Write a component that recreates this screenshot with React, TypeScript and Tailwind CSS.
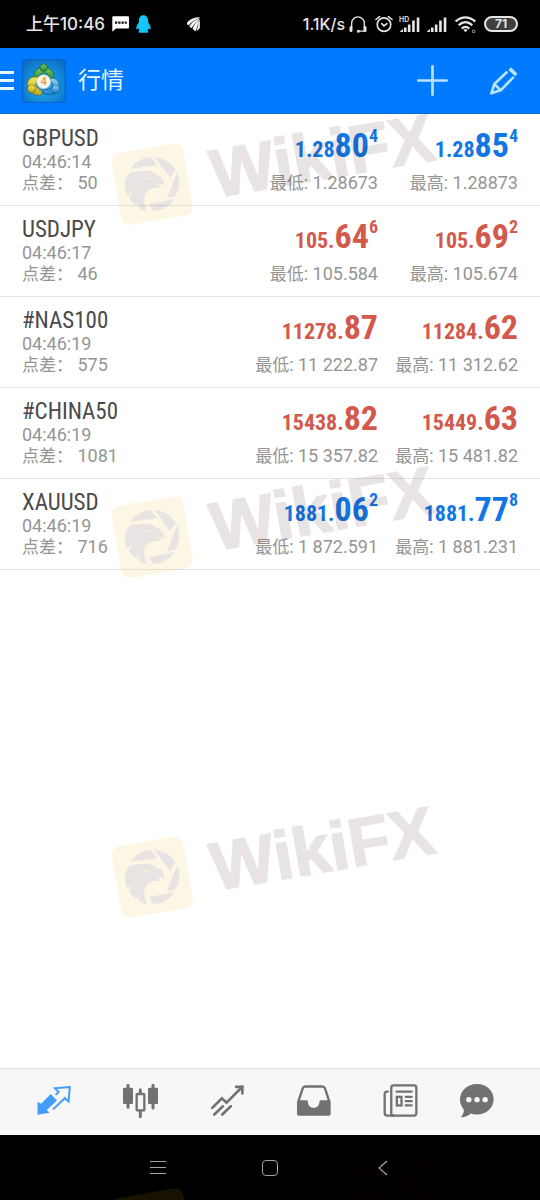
import type { ReactNode } from "react";

type Price = { small: string; big: string; sup?: string };

type Quote = {
  symbol: string;
  time: string;
  spread: string;
  up: boolean;
  bid: Price;
  ask: Price;
  low: string;
  high: string;
};

const quotes: Quote[] = [
  { symbol: "GBPUSD", time: "04:46:14", spread: "50", up: true, bid: { small: "1.28", big: "80", sup: "4" }, ask: { small: "1.28", big: "85", sup: "4" }, low: "1.28673", high: "1.28873" },
  { symbol: "USDJPY", time: "04:46:17", spread: "46", up: false, bid: { small: "105.", big: "64", sup: "6" }, ask: { small: "105.", big: "69", sup: "2" }, low: "105.584", high: "105.674" },
  { symbol: "#NAS100", time: "04:46:19", spread: "575", up: false, bid: { small: "11278.", big: "87" }, ask: { small: "11284.", big: "62" }, low: "11 222.87", high: "11 312.62" },
  { symbol: "#CHINA50", time: "04:46:19", spread: "1081", up: false, bid: { small: "15438.", big: "82" }, ask: { small: "15449.", big: "63" }, low: "15 357.82", high: "15 481.82" },
  { symbol: "XAUUSD", time: "04:46:19", spread: "716", up: true, bid: { small: "1881.", big: "06", sup: "2" }, ask: { small: "1881.", big: "77", sup: "8" }, low: "1 872.591", high: "1 881.231" },
];

function StatusBar() {
  return (
    <div className="flex h-12 items-center bg-black pl-[26px] pr-[22px] font-['Inter','Noto_Sans_CJK_SC',sans-serif] text-base font-medium leading-none text-[#e6e6e6]">
      <span className="text-[17px]">上午10:46</span>
      <svg viewBox="0 0 52 48" className="ml-[7px] h-4 w-[17px]" aria-hidden="true">
        <path d="M3 0H49Q52 0 52 3V35Q52 38 49 38H12L1 48V3Q1 0 3 0Z" fill="#fff" />
        <path d="M9 16h7v7H9zM19 16h7v7h-7zM29 16h7v7h-7zM39 16h6v7h-6z" fill="#111" />
      </svg>
      <svg viewBox="0 0 46 54" className="ml-[7px] h-[18px] w-[15px]" aria-hidden="true">
        <path d="M23 0C33 0 37 8 37 17V22C42 29 46 36 45 42C44 45 41 42 39 40C38 43 37 45 35 47C39 49 40 54 33 54H13C6 54 7 49 11 47C9 45 8 43 7 40C5 42 2 45 1 42C0 36 4 29 9 22V17C9 8 13 0 23 0Z" fill="#12c8f8" />
      </svg>
      <svg viewBox="0 0 40 44" className="ml-9 h-[15px] w-[13px]" aria-hidden="true">
        <path d="M0 18C8 7 22 0 38 1C25 6 13 13 4 24ZM8 28C14 17 24 8 38 5C29 13 20 22 14 32ZM18 35C23 24 30 13 39 9C34 20 29 30 26 42ZM31 40C34 30 36 20 39 14V30Q37 38 31 40Z" fill="#fff" stroke="#fff" strokeWidth="2" />
      </svg>
      <span className="ml-auto">1.1K/s</span>
      <svg viewBox="0 0 54 50" className="ml-1 h-[17px] w-[18px]" fill="none" stroke="currentColor" aria-hidden="true">
        <path d="M8 34V21a19 19 0 0 1 38 0v13M50 45H30" strokeWidth="4" />
        <path d="M6 34v9M48 34v9" strokeWidth="9" strokeLinecap="round" />
        <circle cx="28" cy="45" r="2" strokeWidth="5" />
      </svg>
      <svg viewBox="0 0 56 54" className="ml-2 h-[18px] w-[18px]" fill="none" stroke="currentColor" strokeWidth="5" strokeLinecap="round" aria-hidden="true">
        <circle cx="28" cy="29" r="21" />
        <path d="M3 13 14 4M53 13 42 4M21 26l7 7 9-7" />
      </svg>
      <svg viewBox="0 0 64 50" className="ml-[6px] h-[17px] w-[21px]" fill="currentColor" aria-hidden="true">
        <text x="0" y="16" fontSize="21" fontWeight="600">HD</text>
        <path d="M2 48 12 38V48ZM15 34h8v14h-8zM27 25h8v23h-8zM40 13h8v35h-8zM54 4h8v44h-8z" />
      </svg>
      <svg viewBox="0 0 64 50" className="ml-[6px] h-[17px] w-[21px]" fill="currentColor" aria-hidden="true">
        <path d="M2 48 12 38V48ZM15 34h8v14h-8zM27 25h8v23h-8zM40 13h8v35h-8zM54 4h8v44h-8z" />
      </svg>
      <svg viewBox="0 0 62 50" className="ml-2 h-[17px] w-[21px]" fill="none" stroke="currentColor" strokeWidth="7" aria-hidden="true">
        <path d="M2 16Q30-8 60 16M11 27Q31 9 51 27M20 37Q31 27 42 37" />
        <path d="m31 48-6-7q6-5 12 0Z" fill="currentColor" stroke="none" />
        <circle cx="55" cy="45" r="4" strokeWidth="3" opacity=".6" />
      </svg>
      <span className="ml-2 flex h-4 w-[34px] items-center justify-center rounded-full border-2 border-[#e6e6e6] bg-[#3f3f3f] text-[12px] font-bold leading-none">71</span>
    </div>
  );
}

function AppLogo() {
  return (
    <svg viewBox="0 0 132 132" className="size-11" role="img" aria-label="MetaTrader 4">
      <defs>
        <radialGradient id="tile" cx=".5" cy=".6" r=".7">
          <stop offset="0" stopColor="#21b4ee" />
          <stop offset="1" stopColor="#0a6cc6" />
        </radialGradient>
        <linearGradient id="green" x1="0" y1="0" x2="0" y2="1"><stop stopColor="#7cc95c" /><stop offset="1" stopColor="#1e8a3c" /></linearGradient>
        <linearGradient id="yellow" x1="0" y1="0" x2="0" y2="1"><stop stopColor="#f5e65c" /><stop offset="1" stopColor="#bfa81c" /></linearGradient>
        <linearGradient id="blue" x1="0" y1="0" x2="0" y2="1"><stop stopColor="#8fd6fa" /><stop offset="1" stopColor="#1b80d0" /></linearGradient>
      </defs>
      <rect x="2" y="2" width="128" height="128" rx="8" fill="url(#tile)" stroke="#0a5ec4" strokeWidth="3" />
      <path d="M36 64C33 36 45 26 65 26S98 36 95 62L82 58C80 45 74 42 65 42S52 48 50 60Z" fill="url(#green)" stroke="#135a2a" strokeWidth="2" />
      <circle cx="65" cy="26" r="11" fill="url(#green)" stroke="#135a2a" strokeWidth="2" />
      <path d="M16 76C18 57 32 50 50 56V68C42 68 38 74 44 82C48 90 54 94 62 96L58 108C42 110 30 104 24 96Z" fill="url(#yellow)" stroke="#6b6614" strokeWidth="2" />
      <circle cx="29" cy="89" r="12" fill="url(#yellow)" stroke="#6b6614" strokeWidth="2" />
      <path d="M88 56C108 58 117 76 110 92C101 109 78 111 60 101L66 90C78 94 88 90 91 82C93 74 90 68 84 66Z" fill="url(#blue)" stroke="#0d5090" strokeWidth="2" />
      <circle cx="101" cy="90" r="12" fill="url(#blue)" stroke="#0d5090" strokeWidth="2" />
      <circle cx="65" cy="68" r="21" fill="#f7f5f0" stroke="#c9c9bd" strokeWidth="2" />
      <text x="65" y="79" textAnchor="middle" fontSize="32" fontWeight="700" fill="#f19a52" fontFamily="Liberation Sans, sans-serif">4</text>
    </svg>
  );
}

function Header() {
  return (
    <header className="flex h-[66px] items-center border-b border-[#0a6bd6] bg-[#007aff] pr-[22px]">
      <button type="button" aria-label="菜单" className="flex w-[14px] flex-col gap-[5px]">
        <span className="h-[3px] bg-[#e8f8ff]" />
        <span className="h-[3px] bg-[#e8f8ff]" />
        <span className="h-[3px] bg-[#e8f8ff]" />
      </button>
      <span className="ml-2"><AppLogo /></span>
      <h1 className="ml-3 text-[23px] leading-8 text-[#e4f4ff]">行情</h1>
      <button type="button" aria-label="添加" className="ml-auto">
        <svg viewBox="0 0 92 92" className="size-[31px]" stroke="#b8e3ff" strokeWidth="8" strokeLinecap="round"><path d="M46 4V88M4 46H88" /></svg>
      </button>
      <button type="button" aria-label="编辑" className="ml-[42px]">
        <svg viewBox="0 0 84 84" className="size-7" fill="none" stroke="#b8e3ff" strokeWidth="8" strokeLinejoin="round" strokeLinecap="round">
          <path d="M50 16 13 51 4 79 32 70 69 32M14 52 31 69" />
          <path d="M59 5 79 24" strokeWidth="11" strokeLinecap="butt" />
        </svg>
      </button>
    </header>
  );
}

function PriceColumn({ price, up, label, range }: { price: Price; up: boolean; label: string; range: string }) {
  return (
    <div className="w-35 shrink-0 whitespace-nowrap">
      <p className={`flex h-9 items-baseline justify-end font-['Roboto_Condensed','Roboto',sans-serif] font-bold ${up ? "text-[#1276e4]" : "text-[#d25a4c]"}`}>
        <span className="text-[22px] leading-none">{price.small}</span>
        <span className="text-[34px] leading-9">{price.big}</span>
        {price.sup && <span className="self-start text-lg leading-none">{price.sup}</span>}
      </p>
      <p className="mt-[9px] text-right text-lg leading-[21px] text-[#959595]">
        <span className="text-[17px] leading-none">{label}</span>: {range}
      </p>
    </div>
  );
}

function QuoteRow({ quote }: { quote: Quote }) {
  return (
    <li className="flex border-b border-[#e4e4e4] px-[22px] py-3">
      <div className="min-w-0 flex-1 whitespace-nowrap text-lg leading-[21px] text-[#959595]">
        <h2 className="font-['Roboto_Condensed','Roboto',sans-serif] text-[23px] leading-6 text-[#4a4a4a]">{quote.symbol}</h2>
        <p>{quote.time}</p>
        <p><span className="text-[17px] leading-none">点差：</span> {quote.spread}</p>
      </div>
      <PriceColumn price={quote.bid} up={quote.up} label="最低" range={quote.low} />
      <PriceColumn price={quote.ask} up={quote.up} label="最高" range={quote.high} />
    </li>
  );
}

function Tab({ label, active, children }: { label: string; active?: boolean; children: ReactNode }) {
  return (
    <button type="button" aria-label={label} className={`flex justify-center pt-[15px] ${active ? "text-[#459dfb]" : "text-[#727272]"}`}>
      <span className="flex h-[33px] items-center">{children}</span>
    </button>
  );
}

function TabBar() {
  return (
    <nav className="grid h-[67px] grid-cols-[repeat(5,minmax(0,13fr))_minmax(0,10fr)] border-t border-[#dedede] bg-[#f7f7f7] pl-[11px] pr-[30px]">
      <Tab label="行情" active>
        <svg viewBox="0 0 102 88" className="h-[29px] w-[34px]">
          <path d="M1 48 12 54 41 24 48 31 52 36 60 44 29 73 38 81 1 87Z" fill="currentColor" />
          <path d="M48 71 84 37 95 47 99 3 54 7 65 18 56 27" fill="none" stroke="currentColor" strokeWidth="6" />
        </svg>
      </Tab>
      <Tab label="图表">
        <svg viewBox="0 0 105 102" className="h-[34px] w-[35px]">
          <rect x="0" y="11" width="30" height="49" rx="4" fill="currentColor" />
          <rect x="75" y="11" width="30" height="49" rx="4" fill="currentColor" />
          <path d="M15 4V70M90 4V72M52 17V27M52 82V98" stroke="currentColor" strokeWidth="9" strokeLinecap="round" />
          <rect x="41" y="30" width="23" height="49" rx="2" fill="none" stroke="currentColor" strokeWidth="7" />
        </svg>
      </Tab>
      <Tab label="交易">
        <svg viewBox="0 0 100 93" className="h-[31px] w-[33px]" fill="none" stroke="currentColor" strokeWidth="8">
          <path d="M4 69 33 40 47 53 95 5" strokeLinecap="round" />
          <path d="M76 5H95V25M10 89 36 64M34 89 60 64" strokeLinecap="round" />
        </svg>
      </Tab>
      <Tab label="历史">
        <svg viewBox="0 0 102 92" className="h-[31px] w-[34px]" fill="currentColor" fillRule="evenodd">
          <path d="M0 50 14 8Q17 0 25 0H76Q84 0 87 8L101 50V84Q101 92 93 92H8Q0 92 0 84ZM9 45H29Q33 45 33 51C33 60 41 68 50 68S67 60 67 51Q67 45 71 45H92L81 12Q80 8 76 8H25Q21 8 20 12Z" />
        </svg>
      </Tab>
      <Tab label="新闻">
        <svg viewBox="0 0 104 100" className="h-[33px] w-[35px]" fill="none" stroke="currentColor" strokeWidth="7" strokeLinecap="round">
          <rect x="24" y="4" width="76" height="92" rx="7" />
          <path d="M14 23H11Q4 23 4 31V87Q4 96 12 96H32M40 23H86M68 39H86M68 52H86M68 65H86" />
          <rect x="41" y="39" width="14" height="26" />
        </svg>
      </Tab>
      <Tab label="消息">
        <svg viewBox="0 0 100 100" className="size-[34px]">
          <path d="M50 0C78 0 99 20 99 45S78 90 50 90C42 90 38 89 32 87C24 95 12 99 2 98C9 90 12 84 11 75C4 67 0 57 0 45C0 20 22 0 50 0Z" fill="currentColor" />
          <g fill="#f7f7f7"><circle cx="26" cy="46" r="8" /><circle cx="50" cy="46" r="8" /><circle cx="74" cy="46" r="8" /></g>
        </svg>
      </Tab>
    </nav>
  );
}

function SystemNav() {
  return (
    <div className="flex h-[65px] items-center justify-center bg-black text-[#a5a5a5]">
      <button type="button" aria-label="最近任务" className="flex w-28 justify-center">
        <svg viewBox="0 0 16 15" className="h-[15px] w-4" stroke="currentColor"><path d="M0 1.5H16M0 7.5H16M0 13.5H16" /></svg>
      </button>
      <button type="button" aria-label="主屏幕" className="flex w-28 justify-center">
        <span className="size-4 rounded-[4px] border border-[#a5a5a5]" />
      </button>
      <button type="button" aria-label="返回" className="flex w-28 justify-center">
        <svg viewBox="0 0 16 16" className="size-4" fill="none" stroke="currentColor" strokeWidth="1.3"><path d="M13 1 5 8 13 15" /></svg>
      </button>
    </div>
  );
}

function Watermark({ className }: { className: string }) {
  return (
    <svg viewBox="0 0 1050 430" className={`absolute left-[100px] w-[350px] opacity-10 ${className}`}>
      <path d="M78 152H236Q266 152 266 182V341Q266 371 236 371H78Q48 371 48 341V182Q48 152 78 152Z" fill="#ebb905" transform="rotate(-9.7 157 262)" />
      <g fill="#370500">
        <path d="M91 215A82 82 0 0 1 151 180L173 205ZM163 180A82 82 0 0 1 227 218L210 243ZM232 224A82 82 0 0 1 225 299L201 303ZM224 306A82 82 0 0 1 160 343L147 321Z" />
        <path fillRule="evenodd" d="M75 262C75 246 82 232 92 227C112 221 146 219 160 225C160 229 164 232 172 234C186 238 194 250 193 268C187 260 179 260 170 263L183 268 180 273C164 270 150 275 140 285C130 297 131 314 140 343C128 340 121 336 117 332L114 311 111 328C99 320 91 311 87 303L96 284 82 296C76 284 75 272 75 262ZM130 240C138 244 144 243 150 241C147 248 137 250 130 240Z" />
        <text x="345" y="302" fontSize="204" fontWeight="700" fontFamily="Liberation Sans, sans-serif" stroke="#370500" transform="rotate(-9.7 345 302)">
          <tspan strokeWidth="5" strokeLinejoin="round">Wiki</tspan><tspan strokeWidth="4">FX</tspan>
        </text>
      </g>
    </svg>
  );
}

export default function App() {
  return (
    <div className="relative flex min-h-screen flex-col bg-white font-['Roboto','Noto_Sans_CJK_SC',sans-serif]">
      <StatusBar />
      <Header />
      <main className="flex-1 pt-px">
        <ul>
          {quotes.map((quote) => (
            <QuoteRow key={quote.symbol} quote={quote} />
          ))}
        </ul>
      </main>
      <TabBar />
      <SystemNav />
      <div className="pointer-events-none absolute inset-0 overflow-hidden" aria-hidden="true">
        <Watermark className="top-[97px]" />
        <Watermark className="top-[450px]" />
        <Watermark className="top-[790px]" />
        <Watermark className="top-[1142px]" />
      </div>
    </div>
  );
}
